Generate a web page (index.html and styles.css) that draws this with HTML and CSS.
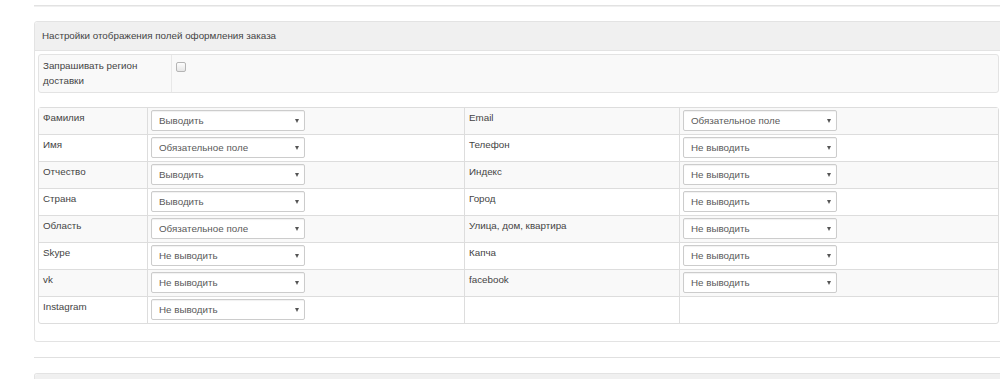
FILE: index.html
```html
<!DOCTYPE html>
<html lang="ru">
<head>
<meta charset="utf-8">
<title>Настройки</title>
<link rel="stylesheet" href="styles.css">
</head>
<body>
<div class="page">
  <div class="topline"></div>
  <div class="panel">
    <div class="panel-heading">Настройки отображения полей оформления заказа</div>
    <div class="panel-body">
      <div class="region-box">
        <div class="region-label">Запрашивать регион доставки</div>
        <div class="region-value"><input type="checkbox" class="check"></div>
      </div>
      <table class="fields">
        <colgroup>
          <col class="c1"><col class="c2"><col class="c3"><col class="c4">
        </colgroup>
        <tbody>
          <tr>
            <td class="lbl">Фамилия</td>
            <td><div class="sel"><select><option>Выводить</option></select></div></td>
            <td class="lbl">Email</td>
            <td><div class="sel"><select><option>Обязательное поле</option></select></div></td>
          </tr>
          <tr>
            <td class="lbl">Имя</td>
            <td><div class="sel"><select><option>Обязательное поле</option></select></div></td>
            <td class="lbl">Телефон</td>
            <td><div class="sel"><select><option>Не выводить</option></select></div></td>
          </tr>
          <tr>
            <td class="lbl">Отчество</td>
            <td><div class="sel"><select><option>Выводить</option></select></div></td>
            <td class="lbl">Индекс</td>
            <td><div class="sel"><select><option>Не выводить</option></select></div></td>
          </tr>
          <tr>
            <td class="lbl">Страна</td>
            <td><div class="sel"><select><option>Выводить</option></select></div></td>
            <td class="lbl">Город</td>
            <td><div class="sel"><select><option>Не выводить</option></select></div></td>
          </tr>
          <tr>
            <td class="lbl">Область</td>
            <td><div class="sel"><select><option>Обязательное поле</option></select></div></td>
            <td class="lbl">Улица, дом, квартира</td>
            <td><div class="sel"><select><option>Не выводить</option></select></div></td>
          </tr>
          <tr>
            <td class="lbl">Skype</td>
            <td><div class="sel"><select><option>Не выводить</option></select></div></td>
            <td class="lbl">Капча</td>
            <td><div class="sel"><select><option>Не выводить</option></select></div></td>
          </tr>
          <tr>
            <td class="lbl">vk</td>
            <td><div class="sel"><select><option>Не выводить</option></select></div></td>
            <td class="lbl">facebook</td>
            <td><div class="sel"><select><option>Не выводить</option></select></div></td>
          </tr>
          <tr>
            <td class="lbl">Instagram</td>
            <td><div class="sel"><select><option>Не выводить</option></select></div></td>
            <td class="lbl"></td>
            <td></td>
          </tr>
        </tbody>
      </table>
    </div>
  </div>
  <div class="hr"></div>
  <div class="panel next">
    <div class="panel-heading empty"></div>
  </div>
</div>
</body>
</html>
```
FILE: styles.css
```css
html, body {
  margin: 0;
  padding: 0;
  background: #fff;
  overflow: hidden;
}
body {
  font-family: "Liberation Sans", Arial, sans-serif;
  font-size: 9.8px;
  color: #444;
}
.page {
  margin-left: 34px;
  width: 969px;
}
.topline {
  margin-top: 5px;
  height: 0;
  border-top: 1px solid #e2e2e2;
  border-bottom: 1px solid #f0f0f0;
}
.panel {
  margin-top: 14px;
  border: 1px solid #e3e3e3;
  border-radius: 3px;
  background: #fff;
}
.panel-heading {
  background: #f0f0f0;
  border-bottom: 1px solid #e3e3e3;
  height: 28px;
  line-height: 28px;
  padding: 0 7px;
  border-radius: 3px 3px 0 0;
}
.panel-body {
  padding: 3px 3px 17px 3px;
}
.region-box {
  display: flex;
  border: 1px solid #e3e3e3;
  border-radius: 3px;
  background: #f9f9f9;
  height: 37px;
}
.region-label {
  width: 124px;
  padding: 3px 4px;
  line-height: 15px;
  border-right: 1px solid #e8e8e8;
}
.region-value {
  padding: 7px 4px;
}
.check {
  appearance: none;
  -webkit-appearance: none;
  margin: 0;
  width: 10px;
  height: 10px;
  border: 1px solid #b5b5b5;
  border-radius: 2px;
  background: linear-gradient(#fdfdfd, #e6e6e6);
  display: block;
}
.fields {
  margin-top: 14px;
  width: 961px;
  border-collapse: separate;
  border-spacing: 0;
  table-layout: fixed;
  border: 1px solid #ddd;
  border-radius: 3px;
}
.c1 { width: 108px; }
.c2 { width: 317px; }
.c3 { width: 215px; }
.c4 { width: 319px; }
.fields td {
  border-left: 1px solid #ddd;
  border-top: 1px solid #ddd;
  padding: 2px 3px 3px 3px;
  vertical-align: top;
  height: 21px;
}
.fields tr td:first-child { border-left: 0; }
.fields tr:first-child td { border-top: 0; }
.fields tr:nth-child(odd) td { background: #f9f9f9; }
.fields td.lbl {
  line-height: 15px;
  padding: 2px 4px 3px 4px;
}
.sel {
  position: relative;
  width: 154px;
  height: 21px;
}
.sel select {
  appearance: none;
  -webkit-appearance: none;
  width: 154px;
  height: 21px;
  margin: 0;
  padding: 0 7px;
  border: 1px solid #ccc;
  border-radius: 2px;
  background: #fff;
  box-shadow: inset 0 1px 1px rgba(0,0,0,0.06);
  font-family: "Liberation Sans", Arial, sans-serif;
  font-size: 9.8px;
  color: #5a5a5a;
}
.sel::after {
  content: "";
  position: absolute;
  right: 6px;
  top: 9px;
  border-left: 2.5px solid transparent;
  border-right: 2.5px solid transparent;
  border-top: 4px solid #555;
}
.hr {
  margin-top: 15px;
  border-top: 1px solid #e0e0e0;
}
.next {
  margin-top: 15px;
  border-bottom: 0;
}
.panel-heading.empty {
  height: 20px;
}
```
